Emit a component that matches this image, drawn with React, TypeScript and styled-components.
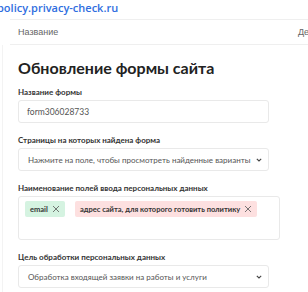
import styled, { createGlobalStyle } from "styled-components";

const GlobalStyle = createGlobalStyle`
  html, body {
    margin: 0;
    padding: 0;
    background: #fff;
  }
  body {
    width: 308px;
    height: 292px;
    overflow: hidden;
    font-family: Lato, "Noto Sans", sans-serif;
  }
`;

const Page = styled.div`
  width: 308px;
  height: 292px;
  overflow: hidden;
  position: relative;
`;

const Domain = styled.a`
  display: block;
  height: 16px;
  line-height: 16px;
  margin-left: -3px;
  font-family: "Open Sans", sans-serif;
  font-size: 11px;
  font-weight: 600;
  color: #2f6ee0;
  text-decoration: none;
  white-space: nowrap;
`;

const TableHead = styled.div`
  margin: 3px 0 0 10px;
  height: 24px;
  border-top: 1px solid #efefef;
  border-bottom: 1px solid #efefef;
  display: flex;
  align-items: center;
  justify-content: space-between;
  font-family: "Liberation Sans", Arial, sans-serif;
  font-size: 9px;
  color: #666;
  white-space: nowrap;
  overflow: hidden;
`;

const HeadCell = styled.span<{ $pad?: number; $cut?: number }>`
  padding-left: ${(p) => p.$pad ?? 0}px;
  margin-right: ${(p) => -(p.$cut ?? 0)}px;
`;

const Panel = styled.div`
  margin-left: 2px;
  padding: 13px 0 0 15px;
  border-left: 1px solid #f3f3f3;
  display: flex;
  flex-direction: column;
`;

const Title = styled.h2`
  margin: 0 0 8px;
  font-size: 16px;
  line-height: 20px;
  font-weight: 700;
  color: #222;
  white-space: nowrap;
`;

const Field = styled.div`
  display: flex;
  flex-direction: column;
  margin-bottom: 11px;
`;

const Label = styled.label`
  font-size: 8px;
  line-height: 12px;
  font-weight: 700;
  color: #333;
  margin-bottom: 2px;
  white-space: nowrap;
`;

const Box = styled.div<{ $width?: number }>`
  box-sizing: border-box;
  width: ${(p) => p.$width ?? 251}px;
  height: 23px;
  border: 1px solid #e9e9e9;
  border-radius: 3px;
  display: flex;
  align-items: center;
  justify-content: space-between;
  padding: 0 6px 0 8px;
  font-size: 8.5px;
  color: #555;
  white-space: nowrap;
  overflow: hidden;
`;

const SelectText = styled.span`
  padding-left: 1px;
  font-size: 8px;
  color: #555;
`;

const Chevron = styled.svg`
  width: 6px;
  height: 4px;
  flex: none;
`;

const Tags = styled.div`
  box-sizing: border-box;
  width: 262px;
  height: 44px;
  border: 1px solid #e9e9e9;
  border-radius: 3px;
  padding: 4px 6px;
  display: flex;
  align-items: flex-start;
  gap: 10px;
`;

const Tag = styled.span<{ $tone: "green" | "red" }>`
  display: inline-flex;
  align-items: center;
  gap: 4px;
  height: 16px;
  padding: 0 5px;
  border-radius: 2px;
  background: ${(p) => (p.$tone === "green" ? "#d5f3e1" : "#fde0e0")};
  font-size: 7.5px;
  font-weight: 700;
  color: #333;
  white-space: nowrap;
`;

const Cross = styled.svg`
  width: 8px;
  height: 8px;
  flex: none;
`;

const ChevronIcon = () => (
  <Chevron viewBox="0 0 6 4">
    <path d="M0.8 0.8 L3 3 L5.2 0.8" fill="none" stroke="#444" strokeWidth="1.1" />
  </Chevron>
);

const CrossIcon = () => (
  <Cross viewBox="0 0 8 8">
    <path d="M1 1 L7 7 M7 1 L1 7" stroke="#555" strokeWidth="0.8" />
  </Cross>
);

export default function App() {
  return (
    <Page>
      <GlobalStyle />
      <Domain href="#">policy.privacy-check.ru</Domain>
      <TableHead>
        <HeadCell $pad={8}>Название</HeadCell>
        <HeadCell $cut={1}>Де</HeadCell>
      </TableHead>
      <Panel>
        <Title>Обновление формы сайта</Title>
        <Field>
          <Label>Название формы</Label>
          <Box>form306028733</Box>
        </Field>
        <Field>
          <Label>Страницы на которых найдена форма</Label>
          <Box>
            <SelectText>Нажмите на поле, чтобы просмотреть найденные варианты</SelectText>
            <ChevronIcon />
          </Box>
        </Field>
        <Field>
          <Label>Наименование полей ввода персональных данных</Label>
          <Tags>
            <Tag $tone="green">
              email <CrossIcon />
            </Tag>
            <Tag $tone="red">
              адрес сайта, для которого готовить политику <CrossIcon />
            </Tag>
          </Tags>
        </Field>
        <Field>
          <Label>Цель обработки персональных данных</Label>
          <Box>
            <SelectText>Обработка входящей заявки на работы и услуги</SelectText>
            <ChevronIcon />
          </Box>
        </Field>
      </Panel>
    </Page>
  );
}
